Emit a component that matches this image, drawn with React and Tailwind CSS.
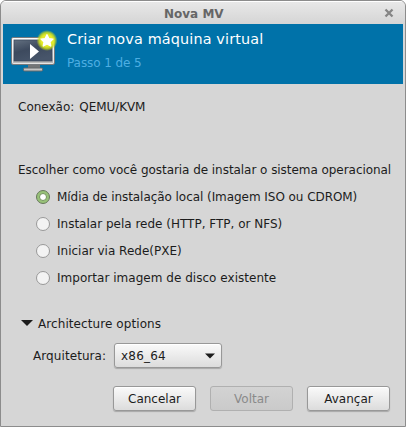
import React from "react";

function MonitorIcon() {
  return (
    <svg width="46" height="44" viewBox="0 0 46 44" className="block shrink-0 overflow-visible">
      <defs>
        <linearGradient id="frame" x1="0" y1="0" x2="0" y2="1">
          <stop offset="0" stopColor="#f4f4f4" />
          <stop offset="1" stopColor="#b4b4b4" />
        </linearGradient>
        <linearGradient id="screen" x1="0" y1="0" x2="0.5" y2="1">
          <stop offset="0" stopColor="#637080" />
          <stop offset="0.5" stopColor="#3d4a5e" />
          <stop offset="1" stopColor="#47556a" />
        </linearGradient>
        <radialGradient id="glow">
          <stop offset="0.55" stopColor="#e6ec2a" />
          <stop offset="0.75" stopColor="#cfdf1c" stopOpacity="0.85" />
          <stop offset="1" stopColor="#c8dc18" stopOpacity="0" />
        </radialGradient>
      </defs>
      <path d="M17 34h12v4H17z" fill="#737577" />
      <rect x="12.5" y="37" width="19" height="3" rx="1" fill="#c4c4c4" stroke="#65686b" />
      <rect x="0.5" y="6.5" width="43" height="27" rx="1.5" fill="url(#frame)" stroke="#777a7d" />
      <rect x="1.5" y="7.5" width="41" height="25" rx="1" fill="none" stroke="#fff" strokeOpacity="0.65" />
      <rect x="3" y="9" width="38" height="21" fill="url(#screen)" stroke="#37455b" strokeWidth="0.7" />
      <path d="M19 13l9 7.5-9 7.5z" fill="#fff" />
      <circle cx="36" cy="9.5" r="10.5" fill="url(#glow)" />
      <path d="M36 3.8l1.8 3.8 4.1.5-3 2.8.8 4.1-3.7-2-3.7 2 .8-4.1-3-2.8 4.1-.5z" fill="#fff" stroke="#fff" strokeWidth="1.4" strokeLinejoin="round" />
    </svg>
  );
}

function Radio({ checked, children, className }) {
  return (
    <label className="flex h-[27px] items-center gap-[7px]">
      <svg width="14" height="14" viewBox="0 0 14 14" className="shrink-0 overflow-visible">
        <circle cx="7" cy="7" r="6.5" fill={checked ? "#98c278" : "#f3f3f3"} stroke={checked ? "#68785d" : "#999999"} />
        {checked && <circle cx="7" cy="7" r="3.5" fill="#fff" stroke="#73925d" />}
      </svg>
      <span className={className}>{children}</span>
    </label>
  );
}

const Arrow = ({ className }) => (
  <svg width="12" height="6" viewBox="0 0 12 6" className={className}>
    <path d="M0 0h12L6 6z" fill="#1c1c1c" />
  </svg>
);

const raised =
  "rounded-[3px] border border-[#989898] bg-linear-to-b from-[#fafafa] to-[#dcdcdc] shadow-[0_1px_1px_rgba(0,0,0,0.22),inset_0_1px_0_#fff]";

export default function App() {
  return (
    <div className="h-[427px] w-[406px] bg-white font-['DejaVu_Sans',sans-serif] text-xs/4 whitespace-nowrap text-[#1c1c1c]">
      <div className="flex h-full flex-col overflow-hidden rounded-t-[6px] border border-[#8c8c8c] bg-[#d6d6d6] px-[2px]">
        <header className="-mx-[2px] flex h-[23px] shrink-0 items-center justify-between border-t border-white bg-linear-to-b from-[#e8e8e8] to-[#d5d5d5] pl-[163px] pr-[11px]">
          <h1 className="pt-px font-bold text-[#666666]">Nova MV</h1>
          <svg width="10" height="10" viewBox="0 0 10 10">
            <path d="M1.5 1.5l7 7M8.5 1.5l-7 7" stroke="#858585" strokeWidth="2.3" />
          </svg>
        </header>
        <section className="flex h-[60px] shrink-0 bg-[#0072a9] pl-2 pt-[5px]">
          <div className="pt-[2px]">
            <MonitorIcon />
          </div>
          <div className="ml-[10px]">
            <h2 className="text-[14.4px]/5 tracking-[0.14px] text-white">Criar nova máquina virtual</h2>
            <p className="mt-[6px] tracking-[-0.08px] text-[#4eaee2]">Passo 1 de 5</p>
          </div>
        </section>
        <main className="flex grow flex-col pl-[15px]">
          <div className="mt-[15px] flex gap-[5px]">
            <span>Conexão:</span>
            <span className="tracking-[-0.08px]">QEMU/KVM</span>
          </div>
          <p className="mt-[47px] tracking-[-0.05px]">Escolher como você gostaria de instalar o sistema operacional</p>
          <div className="ml-[18px] mt-[5px]">
            <Radio checked className="tracking-[-0.055px]">Mídia de instalação local (Imagem ISO ou CDROM)</Radio>
            <Radio>Instalar pela rede (HTTP, FTP, or NFS)</Radio>
            <Radio>Iniciar via Rede(PXE)</Radio>
            <Radio className="tracking-[0.03px]">Importar imagem de disco existente</Radio>
          </div>
          <div className="mt-[25px] flex items-center gap-[5px] pl-[3px]">
            <Arrow className="mb-[2px]" />
            <span className="tracking-[0.08px]">Architecture options</span>
          </div>
          <div className="mt-[11px] flex items-center pl-[15px]">
            <span className="w-[81px] tracking-[0.08px]">Arquitetura:</span>
            <div className={`flex h-[25px] w-[108px] items-center justify-between pl-[6px] pr-[6px] ${raised}`}>
              <span className="tracking-[0.2px]">x86_64</span>
              <Arrow className="w-[10px]" />
            </div>
          </div>
          <footer className="mt-[18px] flex gap-[14px] pl-[95px]">
            <button className={`h-[25px] w-[83px] ${raised}`}>Cancelar</button>
            <button disabled className="h-[25px] w-[83px] rounded-[3px] border border-[#b0b0b0] bg-linear-to-b from-[#d3d3d3] to-[#cacaca] text-[#8a8a8a]">
              Voltar
            </button>
            <button className={`h-[25px] w-[83px] ${raised}`}>Avançar</button>
          </footer>
        </main>
      </div>
    </div>
  );
}
